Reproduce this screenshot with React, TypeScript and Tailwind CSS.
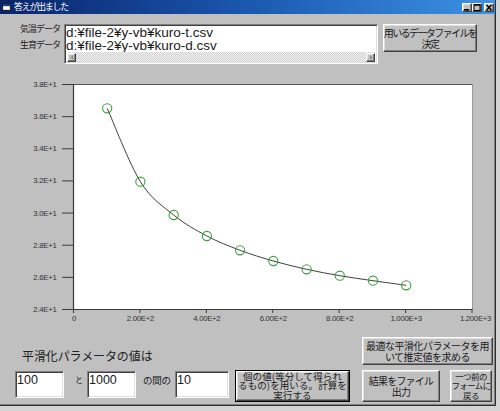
import React from "react";

const JP = "font-['Noto_Sans_CJK_JP',sans-serif]";
const RAISED =
  "bg-[#c0c0c0] border border-t-white border-l-white border-r-[#404040] border-b-[#404040] shadow-[inset_-1px_-1px_0_#808080,inset_1px_1px_0_#dfdfdf]";
const SUNKEN =
  "bg-white border border-t-[#808080] border-l-[#808080] border-r-white border-b-white shadow-[inset_1px_1px_0_#404040,inset_-1px_-1px_0_#dfdfdf]";

const pts: [number, number][] = [
  [107.2, 108.3],
  [140.4, 181.7],
  [173.7, 215],
  [206.9, 236],
  [240.1, 250.3],
  [273.3, 261],
  [306.6, 269.3],
  [339.8, 275.7],
  [373, 280.7],
  [406.2, 285.3],
];

function curve(p: [number, number][]) {
  let d = `M${p[0][0]},${p[0][1]}`;
  for (let i = 0; i < p.length - 1; i++) {
    const p0 = p[i - 1] || p[i];
    const p1 = p[i];
    const p2 = p[i + 1];
    const p3 = p[i + 2] || p2;
    const c1x = p1[0] + (p2[0] - p0[0]) / 6;
    const c1y = p1[1] + (p2[1] - p0[1]) / 6;
    const c2x = p2[0] - (p3[0] - p1[0]) / 6;
    const c2y = p2[1] - (p3[1] - p1[1]) / 6;
    d += ` C${c1x},${c1y} ${c2x},${c2y} ${p2[0]},${p2[1]}`;
  }
  return d;
}

const X0 = 74;
const X1 = 472.5;
const Y0 = 84;
const Y1 = 309;
const yLabels = ["3.8E+1", "3.6E+1", "3.4E+1", "3.2E+1", "3.0E+1", "2.8E+1", "2.6E+1", "2.4E+1"];
const xLabels = ["0", "2.00E+2", "4.00E+2", "6.00E+2", "8.00E+2", "1.000E+3", "1.200E+3"];

function Chart() {
  const yStep = (Y1 - Y0) / 7;
  const xStep = (X1 - X0) / 6;
  return (
    <svg width="495" height="273" viewBox="0 64 495 273" className="block shrink-0">
      <rect x={X0} y={Y0} width={X1 - X0} height={Y1 - Y0} fill="#ffffff" />
      <line x1={X1} y1={Y0} x2={X1} y2={Y1} stroke="#9a9a9a" strokeWidth="1" />
      <line x1={62} y1={Y0 + 0.5} x2={X1} y2={Y0 + 0.5} stroke="#5a5a5a" strokeWidth="1" />
      <line x1={X0 - 0.5} y1={Y0} x2={X0 - 0.5} y2={Y1 + 0.5} stroke="#3a3a3a" strokeWidth="1.2" />
      <line x1={62} y1={Y1 + 0.5} x2={X1} y2={Y1 + 0.5} stroke="#3a3a3a" strokeWidth="1.2" />
      {yLabels.map((l, i) => {
        const y = Y0 + i * yStep;
        return (
          <g key={l}>
            <line x1={62} y1={y + 0.5} x2={X0} y2={y + 0.5} stroke="#3a3a3a" strokeWidth="1" />
            <text
              x={56.5}
              y={y + 3}
              textAnchor="end"
              fontSize="7.8"
              fill="#333333"
              fontFamily="Liberation Sans, Arial, sans-serif"
              letterSpacing="-0.3"
            >
              {l}
            </text>
          </g>
        );
      })}
      {xLabels.map((l, i) => {
        const x = X0 + i * xStep;
        return (
          <g key={l}>
            <line x1={x - 0.5} y1={Y1} x2={x - 0.5} y2={Y1 + 4} stroke="#3a3a3a" strokeWidth="1" />
            <text
              x={x + (i === 6 ? 3 : 0)}
              y={321}
              textAnchor="middle"
              fontSize="7.8"
              fill="#333333"
              fontFamily="Liberation Sans, Arial, sans-serif"
              letterSpacing="-0.3"
            >
              {l}
            </text>
          </g>
        );
      })}
      <path d={curve(pts)} fill="none" stroke="#404040" strokeWidth="1" />
      {pts.map(([x, y], i) => (
        <circle key={i} cx={x} cy={y} r="4.6" fill="none" stroke="#3e9e3e" strokeWidth="1.1" />
      ))}
    </svg>
  );
}

function TitleIcon() {
  return (
    <svg width="9" height="8" viewBox="0 0 9 8" className="block">
      <rect x="0.5" y="0.5" width="8" height="7" fill="#d8d8d8" stroke="#202020" strokeWidth="1" />
      <rect x="1" y="1" width="7" height="2" fill="#1a3a8a" />
      <rect x="2" y="4" width="5" height="2" fill="#ffffff" />
    </svg>
  );
}

function WinBtn({ kind }: { kind: "min" | "max" | "close" }) {
  return (
    <div className={`w-[10px] h-[9px] flex items-center justify-center ${RAISED}`}>
      <svg width="8" height="7" viewBox="0 0 8 7" className="block">
        {kind === "min" && <rect x="1" y="5" width="5" height="1.6" fill="#000" />}
        {kind === "max" && (
          <>
            <rect x="1" y="0.5" width="6" height="6" fill="none" stroke="#000" strokeWidth="1" />
            <rect x="1" y="0.5" width="6" height="1.2" fill="#000" />
          </>
        )}
        {kind === "close" && (
          <path d="M1.5 0.8 L6.5 6.2 M6.5 0.8 L1.5 6.2" stroke="#000" strokeWidth="1.4" />
        )}
      </svg>
    </div>
  );
}

function Arrow({ dir }: { dir: "l" | "r" }) {
  return (
    <div className={`w-[9px] h-[9px] flex items-center justify-center ${RAISED}`}>
      <svg width="4" height="5" viewBox="0 0 4 5" className="block">
        {dir === "l" ? <path d="M3 0 L0.5 2.5 L3 5 Z" fill="#909090" /> : <path d="M1 0 L3.5 2.5 L1 5 Z" fill="#909090" />}
      </svg>
    </div>
  );
}

export default function App() {
  return (
    <div className="w-[500px] h-[411px] bg-[#d4d4d4] overflow-hidden">
      <div className="w-[496px] h-[406px] flex flex-col bg-[#c0c0c0] border-r border-b border-[#303030] shadow-[inset_-1px_-1px_0_#808080] text-black">
        {/* Title bar */}
        <div className="h-[14px] shrink-0 flex items-center pl-[2px] pr-[1px] bg-linear-to-r from-[#0a246a] via-[#1b58b0] to-[#3c92e4]">
          <TitleIcon />
          <span className={`ml-[3px] text-white text-[9px] leading-[10px] tracking-[-1.3px] ${JP}`}>答えが出ました</span>
          <div className="ml-auto flex items-center">
            <WinBtn kind="min" />
            <WinBtn kind="max" />
            <div className="ml-[2px]">
              <WinBtn kind="close" />
            </div>
          </div>
        </div>

        {/* File row */}
        <div className="mt-[10px] h-[40px] shrink-0 flex items-start">
          <div className={`ml-[20px] w-[44px] mt-[-1px] flex flex-col gap-[5px] text-[9px] leading-[11px] tracking-[-1px] whitespace-nowrap text-[#202020] ${JP}`}>
            <span>気温データ</span>
            <span>生育データ</span>
          </div>
          <div className={`w-[314px] h-[40px] flex flex-col ${SUNKEN}`}>
            <div className="pl-[1px] pt-[1px] font-['Liberation_Sans',Arial,sans-serif] text-[13.5px] leading-[13px] text-[#1a1a1a] whitespace-nowrap">
              <div>d:¥file-2¥y-vb¥kuro-t.csv</div>
              <div>d:¥file-2¥y-vb¥kuro-d.csv</div>
            </div>
            <div className="mt-auto mb-[1px] ml-[2px] mr-[2px] h-[10px] flex items-center justify-between bg-[image:repeating-conic-gradient(#d0d0d0_0%_25%,#f2f2f2_0%_50%)] bg-[length:2px_2px]">
              <Arrow dir="l" />
              <Arrow dir="r" />
            </div>
          </div>
          <div className={`ml-[5px] w-[94px] h-[28px] flex flex-col items-center justify-center text-[10px] leading-[11px] tracking-[-1.6px] whitespace-nowrap text-[#1a1a1a] ${JP} ${RAISED}`}>
            <span>用いるデータファイルを</span>
            <span>決定</span>
          </div>
        </div>

        <Chart />

        {/* Row A */}
        <div className="h-[28px] shrink-0 flex items-end">
          <span className={`ml-[22px] mb-[3px] text-[12px] leading-[12px] tracking-[-0.1px] text-[#202020] whitespace-nowrap ${JP}`}>
            平滑化パラメータの値は
          </span>
          <div className={`ml-auto mr-[2px] w-[131px] h-[28px] flex flex-col items-center justify-center text-[10px] leading-[11px] tracking-[-0.5px] whitespace-nowrap text-[#1a1a1a] ${JP} ${RAISED}`}>
            <span>最適な平滑化パラメータを用</span>
            <span>いて推定値を求める</span>
          </div>
        </div>

        {/* Row B */}
        <div className="mt-[5px] h-[32px] shrink-0 flex items-start">
          <div className={`ml-[15px] mt-[1px] w-[49px] h-[27px] pl-[1px] pt-[1px] font-['Liberation_Sans',Arial,sans-serif] text-[12.5px] leading-[14px] text-[#1a1a1a] ${SUNKEN}`}>
            100
          </div>
          <span className={`ml-[11px] mt-[5px] w-[7px] text-[8px] leading-[10px] text-[#202020] ${JP}`}>と</span>
          <div className={`ml-[5px] mt-[1px] w-[49px] h-[27px] pl-[1px] pt-[1px] font-['Liberation_Sans',Arial,sans-serif] text-[12.5px] leading-[14px] text-[#1a1a1a] ${SUNKEN}`}>
            1000
          </div>
          <span className={`ml-[7px] mt-[5px] w-[29px] text-[9.5px] leading-[10px] tracking-[-0.3px] whitespace-nowrap text-[#202020] ${JP}`}>の間の</span>
          <div className={`ml-[3px] mt-[1px] w-[54px] h-[27px] pl-[1px] pt-[1px] font-['Liberation_Sans',Arial,sans-serif] text-[12.5px] leading-[14px] text-[#1a1a1a] ${SUNKEN}`}>
            10
          </div>
          <div className="ml-[6px] w-[115px] h-[32px] border border-black">
            <div className={`w-full h-full flex flex-col items-center justify-center text-[9.5px] leading-[9.5px] tracking-[0.1px] whitespace-nowrap text-[#1a1a1a] ${JP} ${RAISED}`}>
              <span>個の値(等分して得られ</span>
              <span>るもの)を用いる。計算を</span>
              <span>実行する</span>
            </div>
          </div>
          <div className={`ml-[12px] w-[78px] h-[32px] flex flex-col items-center justify-center text-[10px] leading-[11px] tracking-[-0.8px] whitespace-nowrap text-[#1a1a1a] ${JP} ${RAISED}`}>
            <span>結果をファイル</span>
            <span>出力</span>
          </div>
          <div className={`ml-[10px] w-[42px] h-[32px] flex flex-col items-center justify-center text-[8.5px] leading-[9.3px] tracking-[-0.6px] whitespace-nowrap text-[#1a1a1a] ${JP} ${RAISED}`}>
            <span>一つ前の</span>
            <span>フォームに</span>
            <span>戻る</span>
          </div>
        </div>
      </div>
    </div>
  );
}
